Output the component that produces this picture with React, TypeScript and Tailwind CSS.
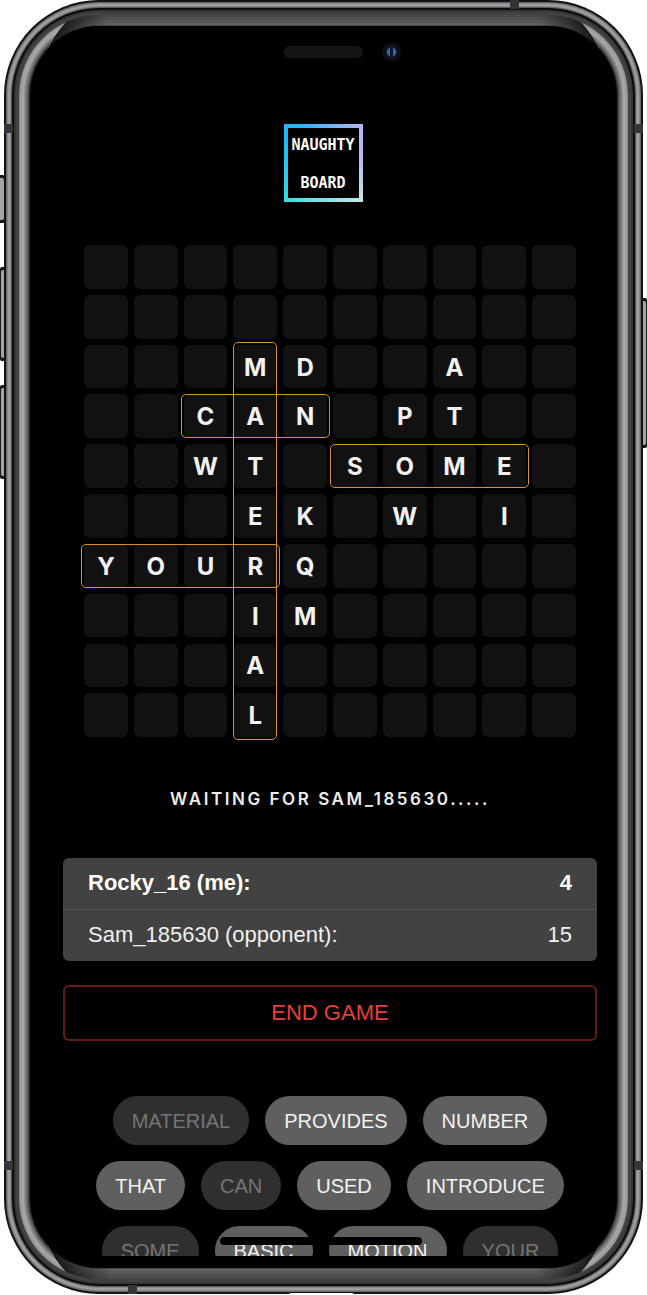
import React from "react";

const ROWS = [
  "          ",
  "          ",
  "   MD  A  ",
  "  CAN PT  ",
  "  WT SOME ",
  "   EK W I ",
  "YOURQ     ",
  "   IM     ",
  "   A      ",
  "   L      ",
];

const PLACED = [
  "col-start-4 row-start-3 row-span-8 -my-[3px]",
  "col-start-3 col-span-3 row-start-4 -mx-[3px]",
  "col-start-6 col-span-4 row-start-5 -mx-[3px]",
  "col-start-1 col-span-4 row-start-7 -mx-[3px]",
];

const WORDS = [
  { text: "MATERIAL", used: true },
  { text: "PROVIDES", used: false },
  { text: "NUMBER", used: false },
  { text: "THAT", used: false },
  { text: "CAN", used: true },
  { text: "USED", used: false },
  { text: "INTRODUCE", used: false },
  { text: "SOME", used: true },
  { text: "BASIC", used: false },
  { text: "MOTION", used: false },
  { text: "YOUR", used: true },
];

type Ring = [number, string];

const RIM: Ring[] = [
  [0, "#121214"],
  [2, "#6a6869"],
  [3, "#868485"],
  [4, "#a09e9f"],
  [6, "#8a8889"],
  [7, "#5c5a5b"],
  [8, "#0b0b0b"],
  [10, "#363636"],
  [12, "#424242"],
];

const TOP_BEVEL: Ring[] = [
  [15, "#4a4a4a"],
  [17, "#505050"],
  [20, "#585858"],
  [23, "#626262"],
  [25, "#4a4a4a"],
];

const SIDE_BEVEL: Ring[] = [
  [15, "#8e8e8e"],
  [16, "#9e9e9e"],
  [18, "#a6a6a6"],
  [20, "#929292"],
  [21, "#828282"],
  [22, "#727272"],
  [23, "#5f5f5f"],
  [24, "#494949"],
  [25, "#2a2a2a"],
];

function Rings({ rings }: { rings: Ring[] }) {
  return (
    <>
      {rings.map(([d, fill]) => (
        <rect key={d} x={4 + d} y={d} width={639 - 2 * d} height={1294 - 2 * d} rx={95 - d} fill={fill} />
      ))}
    </>
  );
}

function SideButton({ x, y, h }: { x: number; y: number; h: number }) {
  return (
    <>
      <rect x={x} y={y} width="9" height={h} rx="2" fill="#17171a" />
      <rect x={x + 1} y={y + 3} width="7" height={h - 6} rx="2" fill="#a5a3a5" />
    </>
  );
}

function Phone() {
  return (
    <svg
      className="absolute inset-0 h-full w-full"
      viewBox="0 0 647 1295"
      preserveAspectRatio="none"
      aria-hidden="true"
    >
      <defs>
        <clipPath id="left">
          <path d="M0 0H67V21Q54 34 46 52V1242Q54 1260 67 1273V1294H0Z" />
        </clipPath>
        <clipPath id="right">
          <path d="M647 0H580V21Q593 34 601 52V1242Q593 1260 580 1273V1294H647Z" />
        </clipPath>
        <linearGradient id="shade" x1="0" x2="1" y1="0" y2="0">
          <stop offset="0.05" stopColor="#000" stopOpacity="0.8" />
          <stop offset="0.15" stopColor="#000" stopOpacity="0" />
          <stop offset="0.85" stopColor="#000" stopOpacity="0" />
          <stop offset="0.95" stopColor="#000" stopOpacity="0.8" />
        </linearGradient>
        <pattern id="mesh" width="2" height="2" patternUnits="userSpaceOnUse">
          <rect width="2" height="2" fill="#0c0c0c" />
          <rect width="1" height="1" fill="#202020" />
          <rect x="1" y="1" width="1" height="1" fill="#1c1c1c" />
        </pattern>
      </defs>
      <SideButton x={-4} y={175} h={48} />
      <SideButton x={0} y={267} h={94} />
      <SideButton x={0} y={385} h={94} />
      <SideButton x={638} y={298} h={150} />
      <Rings rings={RIM} />
      <Rings rings={TOP_BEVEL} />
      <rect x="19" y="15" width="609" height="1264" rx="80" fill="url(#shade)" />
      <g clipPath="url(#left)">
        <Rings rings={SIDE_BEVEL} />
      </g>
      <g clipPath="url(#right)">
        <Rings rings={SIDE_BEVEL} />
      </g>
      <rect x="30" y="26" width="587" height="1242" rx="69" fill="#000" />
      <g fill="#33353b">
        <rect x="4" y="124" width="9" height="9" />
        <rect x="634" y="124" width="9" height="9" />
        <rect x="4" y="1161" width="9" height="9" />
        <rect x="634" y="1161" width="9" height="9" />
        <rect x="510" y="0" width="9" height="9" />
        <rect x="128" y="1285" width="9" height="9" />
      </g>
      <path d="M286 1295 291 1293H352L357 1295Z" fill="#fff" />
      <rect x="284" y="46" width="79" height="12" rx="6" fill="url(#mesh)" />
      <circle cx="391.500" cy="52" r="9.500" fill="#0e0f13" />
      <circle cx="391.500" cy="52" r="6" fill="#10172e" />
      <path d="M390 47.500a4.800 4.800 0 0 0 0 9zM393 47.500a4.800 4.800 0 0 1 0 9z" fill="#37639f" />
    </svg>
  );
}

function Logo() {
  return (
    <h1 className="relative flex h-[78px] w-[79px] flex-col items-center justify-between bg-black pt-[11px] pb-[9px] font-['Liberation_Sans_Narrow','DejaVu_Sans_Mono',sans-serif] text-[15px] leading-5 font-bold text-white">
      <svg className="absolute inset-0 h-full w-full" viewBox="0 0 79 78" aria-hidden="true">
        <defs>
          <linearGradient id="edge-top" x1="0" x2="1" y1="0" y2="0">
            <stop offset="0.2" stopColor="#21b4f8" />
            <stop offset="1" stopColor="#b9b6f3" />
          </linearGradient>
          <linearGradient id="edge-bottom" x1="0" x2="1" y1="0" y2="0">
            <stop offset="0" stopColor="#34dbe5" />
            <stop offset="1" stopColor="#c8e9e5" />
          </linearGradient>
          <linearGradient id="edge-left" x1="0" x2="0" y1="0" y2="1">
            <stop offset="0.2" stopColor="#21b4f8" />
            <stop offset="1" stopColor="#34dbe5" />
          </linearGradient>
          <linearGradient id="edge-right" x1="0" x2="0" y1="0" y2="1">
            <stop offset="0.4" stopColor="#b9b6f3" />
            <stop offset="1" stopColor="#c8e9e5" />
          </linearGradient>
        </defs>
        <rect width="4" height="78" fill="url(#edge-left)" />
        <rect x="75" width="4" height="78" fill="url(#edge-right)" />
        <rect width="79" height="4" fill="url(#edge-top)" />
        <rect y="74" width="79" height="4" fill="url(#edge-bottom)" />
      </svg>
      <span>NAUGHTY</span>
      <span>BOARD</span>
    </h1>
  );
}

function Board() {
  return (
    <div className="relative mx-[21px] mt-[43px]">
      <div className="grid grid-cols-10 gap-[6px]">
        {ROWS.flatMap((row, r) =>
          row.split("").map((letter, c) => (
            <div
              key={`${r}-${c}`}
              className="flex aspect-square items-center justify-center rounded-md bg-[#111111] pt-[2px] font-['Inter',sans-serif] text-[24px] leading-none font-bold text-[#f2f2f2] [font-optical-sizing:none]"
            >
              {letter.trim()}
            </div>
          )),
        )}
      </div>
      <div className="pointer-events-none absolute inset-0 grid grid-cols-10 grid-rows-10 gap-[6px]">
        {PLACED.map((place) => (
          <div key={place} className={`rounded-[5px] border border-[#dc921f] ${place}`} />
        ))}
      </div>
    </div>
  );
}

export default function App() {
  return (
    <div className="relative h-screen w-full overflow-hidden bg-white">
      <Phone />
      <main className="relative flex h-full flex-col pt-[124px] pr-[31px] pb-[39px] pl-[30px] font-['Liberation_Sans',Arial,sans-serif]">
        <div className="min-h-0 flex-1 overflow-hidden">
          <header className="flex justify-center">
            <Logo />
          </header>
          <div className="pr-[19px] pl-[33px]">
            <Board />
            <p className="mt-[50px] text-center font-['Inter',sans-serif] text-[17px] leading-6 font-semibold tracking-[0.15em] text-[#ececec]">
              WAITING FOR SAM_185630.....
            </p>
            <div className="mt-[47px] overflow-hidden rounded-md bg-[#424242]">
              <table className="w-full border-collapse text-[22px] leading-none text-[#f0f0f0]">
                <tbody>
                  <tr className="h-[51px] border-b border-[#505050] font-bold text-white">
                    <th scope="row" className="pl-[25px] text-left">Rocky_16 (me):</th>
                    <td className="pr-[25px] text-right">4</td>
                  </tr>
                  <tr className="h-[52px]">
                    <th scope="row" className="pl-[25px] text-left font-normal">Sam_185630 (opponent):</th>
                    <td className="pr-[25px] text-right">15</td>
                  </tr>
                </tbody>
              </table>
            </div>
            <button
              type="button"
              className="mt-[24px] block h-[56px] w-full rounded-md border-2 border-[#641b19] text-[22px] leading-none text-[#ea3e35]"
            >
              END GAME
            </button>
            <div className="mt-[55px] flex flex-wrap justify-center gap-4 px-5">
              {WORDS.map(({ text, used }) => (
                <button
                  key={text}
                  type="button"
                  disabled={used}
                  className={`h-[49px] rounded-full px-[19px] text-[20px] leading-none ${
                    used ? "bg-[#2f2f2f] text-[#757575]" : "bg-[#5f5f5f] text-[#f2f2f2]"
                  }`}
                >
                  {text}
                </button>
              ))}
            </div>
          </div>
        </div>
        <div className="absolute bottom-[50px] left-1/2 h-2 w-[202px] -translate-x-[104px] rounded-full bg-black" />
      </main>
    </div>
  );
}
